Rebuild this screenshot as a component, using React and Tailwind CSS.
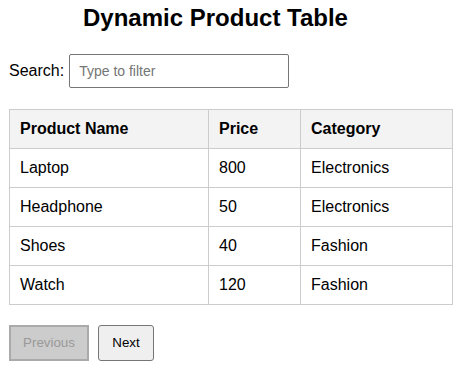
import { useState } from "react"

const products = [
  { name: "Laptop", price: 800, category: "Electronics" },
  { name: "Headphone", price: 50, category: "Electronics" },
  { name: "Shoes", price: 40, category: "Fashion" },
  { name: "Watch", price: 120, category: "Fashion" },
]

const App = () => {
  const [query, setQuery] = useState("")
  const rows = products.filter(p => p.name.toLowerCase().includes(query.toLowerCase()))

  return (
    <div className="bg-white text-black min-h-screen px-[9px] font-['Liberation_Sans',Arial,sans-serif]">
      <h2 className="w-[413px] pt-[4px] text-center text-[24px] leading-[28px] font-bold">Dynamic Product Table</h2>

      <div className="flex items-center gap-[5px] mt-[22px]">
        <label className="text-[16px]">Search:</label>
        <input
          type="text"
          value={query}
          onChange={e => setQuery(e.target.value)}
          placeholder="Type to filter"
          className="w-[220px] h-[34px] border border-[#767676] rounded-[2px] pl-[9px] text-[14px] placeholder:text-[#757575] outline-none"
        />
      </div>

      <table className="mt-[21px] w-[444px] border-collapse text-[16px]">
        <thead>
          <tr className="bg-[#f3f3f3]">
            <th className="w-[199px] h-[39px] border border-[#cccccc] px-[10px] text-left font-bold">Product Name</th>
            <th className="w-[92px] h-[39px] border border-[#cccccc] px-[10px] text-left font-bold">Price</th>
            <th className="h-[39px] border border-[#cccccc] px-[10px] text-left font-bold">Category</th>
          </tr>
        </thead>
        <tbody>
          {rows.map(p => (
            <tr key={p.name}>
              <td className="h-[39px] border border-[#cccccc] px-[10px]">{p.name}</td>
              <td className="h-[39px] border border-[#cccccc] px-[10px]">{p.price}</td>
              <td className="h-[39px] border border-[#cccccc] px-[10px]">{p.category}</td>
            </tr>
          ))}
        </tbody>
      </table>

      <div className="flex gap-[9px] mt-[20px]">
        <button disabled className="w-[80px] h-[36px] bg-[#cccccc] border-2 border-[#aaaaaa] text-[#999999] text-[13.33px]">Previous</button>
        <button className="w-[56px] h-[36px] bg-[#efefef] border border-[#767676] rounded-[3px] text-[13.33px]">Next</button>
      </div>
    </div>
  )
}

export default App
